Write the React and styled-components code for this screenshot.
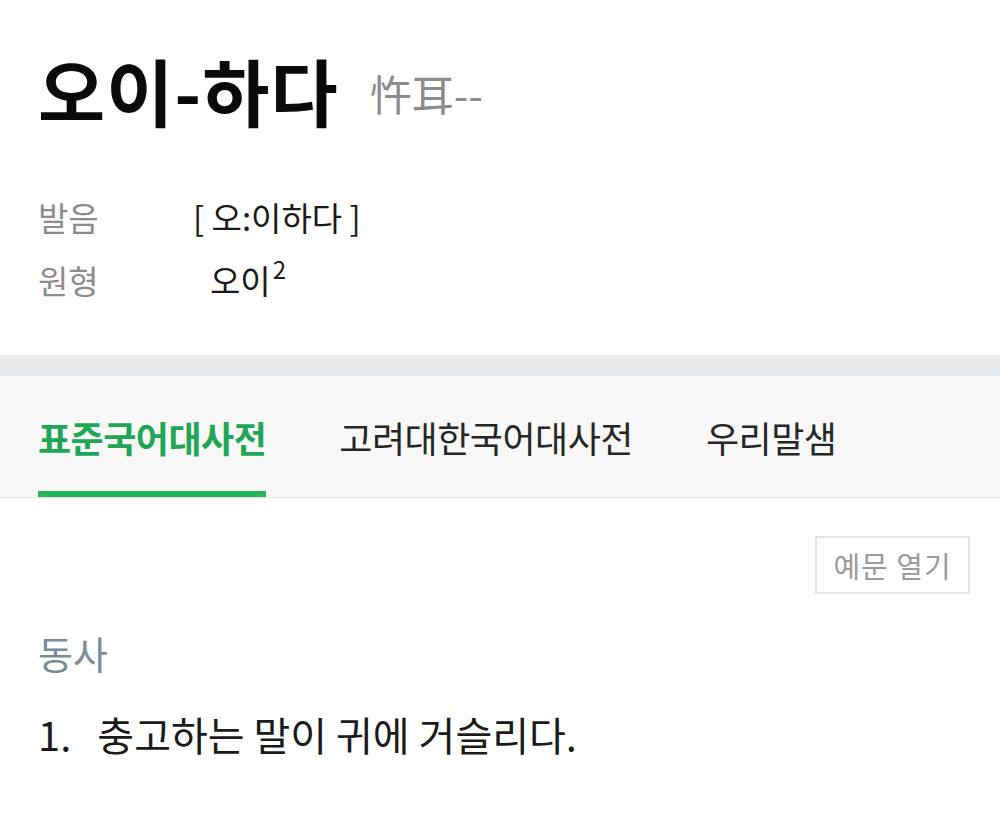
import React from 'react';
import styled, { createGlobalStyle } from 'styled-components';

const GlobalStyle = createGlobalStyle`
  html, body {
    margin: 0;
    padding: 0;
    background: #ffffff;
  }
  body {
    font-family: "Noto Sans CJK KR", "Noto Sans", sans-serif;
    color: #111;
  }
`;

const Page = styled.div`
  width: 1000px;
  height: 831px;
  overflow: hidden;
  background: #fff;
`;

const Header = styled.div`
  padding: 39px 38px 0;
  height: 355px;
  box-sizing: border-box;
`;

const TitleRow = styled.div`
  display: flex;
  align-items: center;
  gap: 31px;
`;

const Title = styled.h1`
  margin: 0;
  font-size: 73px;
  font-weight: 700;
  line-height: 100px;
  color: #0a0a0a;
  letter-spacing: 1px;
`;

const Hanja = styled.span`
  font-size: 42px;
  color: #8c8c8c;
  font-weight: 400;
  padding-top: 6px;
`;

const InfoList = styled.dl`
  margin: 55px 0 0;
  display: grid;
  grid-template-columns: 155px auto;
  row-gap: 17px;
  align-items: center;
`;

const Label = styled.dt`
  font-size: 33px;
  line-height: 46px;
  color: #8c8c8c;
`;

const Value = styled.dd`
  margin: 0;
  font-size: 33px;
  line-height: 46px;
  color: #1a1a1a;
  padding-left: ${p => p.$indent || 0}px;

  sup {
    font-size: 24px;
    vertical-align: 15px;
    line-height: 0;
    margin-left: 2px;
  }
`;

const Band = styled.div`
  height: 21px;
  background: #e8ebed;
`;

const TabBar = styled.nav`
  display: flex;
  gap: 73px;
  padding: 0 38px;
  height: 121px;
  background: #f8f8f8;
  border-bottom: 1px solid #e4e4e4;
`;

const Tab = styled.div`
  display: flex;
  align-items: center;
  font-size: 36px;
  letter-spacing: -0.5px;
  font-weight: ${p => (p.$active ? 700 : 400)};
  color: ${p => (p.$active ? '#1fa656' : '#262626')};
  border-bottom: 6px solid ${p => (p.$active ? '#22b45a' : 'transparent')};
  padding-top: 6px;
`;

const Body = styled.div`
  padding: 38px 30px 0 38px;
`;

const Toolbar = styled.div`
  display: flex;
  justify-content: flex-end;
`;

const OpenButton = styled.button`
  width: 155px;
  height: 58px;
  border: 2px solid #e3e3e3;
  background: #fff;
  font-family: inherit;
  font-size: 29px;
  color: #9a9a9a;
  letter-spacing: 1px;
  padding: 0;
`;

const PartOfSpeech = styled.div`
  margin-top: 36px;
  font-size: 38px;
  line-height: 46px;
  color: #7b8a98;
`;

const Definition = styled.p`
  margin: 32px 0 0;
  font-size: 40px;
  line-height: 52px;
  color: #1a1a1a;

  span {
    margin-right: 26px;
  }
`;

export default function App() {
  return (
    <Page>
      <GlobalStyle />
      <Header>
        <TitleRow>
          <Title>오이-하다</Title>
          <Hanja>忤耳--</Hanja>
        </TitleRow>
        <InfoList>
          <Label>발음</Label>
          <Value>[ 오:이하다 ]</Value>
          <Label>원형</Label>
          <Value $indent={17}>
            오이<sup>2</sup>
          </Value>
        </InfoList>
      </Header>
      <Band />
      <TabBar>
        <Tab $active>표준국어대사전</Tab>
        <Tab>고려대한국어대사전</Tab>
        <Tab>우리말샘</Tab>
      </TabBar>
      <Body>
        <Toolbar>
          <OpenButton>예문 열기</OpenButton>
        </Toolbar>
        <PartOfSpeech>동사</PartOfSpeech>
        <Definition>
          <span>1.</span>충고하는 말이 귀에 거슬리다.
        </Definition>
      </Body>
    </Page>
  );
}
